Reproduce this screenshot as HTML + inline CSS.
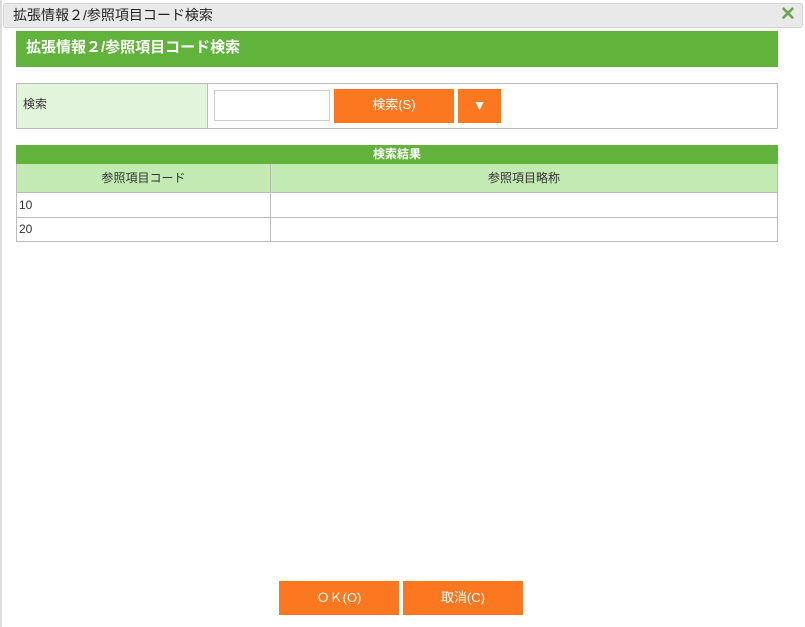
<!DOCTYPE html>
<html><head><meta charset="utf-8"><style>
body{margin:0;width:805px;height:627px;background:#fff;font-family:"Liberation Sans","Noto Sans CJK JP",sans-serif;position:relative;overflow:hidden;font-size:12px;color:#333}
.a{position:absolute;box-sizing:border-box}
.btn{background:#fb7720;color:#fff;font-size:13px;text-align:center}
</style></head><body>
<div class="a" style="left:0;top:0;width:2px;height:627px;background:#dcdcdc"></div>
<div class="a" style="left:3px;top:3px;width:800px;height:25px;background:#e9e9e9;border:1px solid #d4d4d4;border-radius:3px;font-size:14px;line-height:23px;padding-left:9px;color:#222">拡張情報２/参照項目コード検索</div>
<div class="a" style="left:780px;top:3px;font-size:19px;color:#6aa84f;font-weight:bold;line-height:24px">✕</div>
<div class="a" style="left:16px;top:31px;width:762px;height:36px;background:#62b33c;color:#fff;font-weight:bold;font-size:15px;line-height:33px;padding-left:10px">拡張情報２/参照項目コード検索</div>
<div class="a" style="left:16px;top:83px;width:762px;height:46px;border:1px solid #bcbcbc"></div>
<div class="a" style="left:17px;top:84px;width:191px;height:44px;background:#e3f4dc;border-right:1px solid #bcbcbc;line-height:40px;padding-left:6px">検索</div>
<div class="a" style="left:214px;top:90px;width:116px;height:31px;border:1px solid #ccc"></div>
<div class="a btn" style="left:334px;top:89px;width:120px;height:34px;line-height:32px">検索(S)</div>
<div class="a btn" style="left:458px;top:89px;width:43px;height:34px;line-height:32px;font-size:14px">▼</div>
<div class="a" style="left:16px;top:145px;width:762px;height:20px;background:#62b33c;color:#fff;font-weight:bold;text-align:center;line-height:19px">検索結果</div>
<div class="a" style="left:16px;top:164px;width:762px;height:78px;border:1px solid #bcbcbc;border-top:none"></div>
<div class="a" style="left:17px;top:164px;width:760px;height:29px;background:#c3eab3;border-bottom:1px solid #bcbcbc"></div>
<div class="a" style="left:17px;top:164px;width:253px;height:29px;text-align:center;line-height:28px">参照項目コード</div>
<div class="a" style="left:271px;top:164px;width:506px;height:29px;text-align:center;line-height:28px">参照項目略称</div>
<div class="a" style="left:270px;top:164px;width:1px;height:78px;background:#bcbcbc"></div>
<div class="a" style="left:17px;top:217px;width:760px;height:1px;background:#bcbcbc"></div>
<div class="a" style="left:19px;top:193px;line-height:24px">10</div>
<div class="a" style="left:19px;top:217px;line-height:24px">20</div>
<div class="a btn" style="left:279px;top:581px;width:120px;height:34px;line-height:34px">ＯＫ(O)</div>
<div class="a btn" style="left:403px;top:581px;width:120px;height:34px;line-height:34px">取消(C)</div>
</body></html>
